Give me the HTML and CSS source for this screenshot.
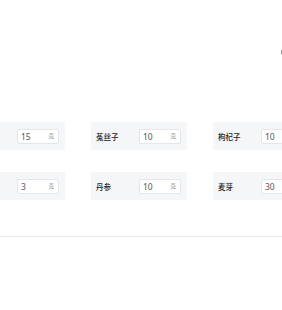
FILE: index.html
```html
<!DOCTYPE html>
<html lang="zh">
<head>
<meta charset="utf-8">
<link rel="stylesheet" href="styles.css">
</head>
<body>
<div class="page">
  <div class="toolbar">
    <svg class="tool-icon" width="8" height="10" viewBox="0 0 8 10"><path d="M6 1.5 A3.5 3.5 0 0 0 6 8.5" fill="none" stroke="#9a9a9a" stroke-width="1.2"/></svg>
  </div>
  <div class="grid">
    <div class="card"><span class="name">黄芪</span><div class="field"><span class="val">15</span><span class="unit">克</span></div></div>
    <div class="card"><span class="name">菟丝子</span><div class="field"><span class="val">10</span><span class="unit">克</span></div></div>
    <div class="card"><span class="name">枸杞子</span><div class="field"><span class="val">10</span><span class="unit">克</span></div></div>
    <div class="card"><span class="name">当归</span><div class="field"><span class="val">10</span><span class="unit">克</span></div></div>
    <div class="card"><span class="name">甘草</span><div class="field"><span class="val">3</span><span class="unit">克</span></div></div>
    <div class="card"><span class="name">丹参</span><div class="field"><span class="val">10</span><span class="unit">克</span></div></div>
    <div class="card"><span class="name">麦芽</span><div class="field"><span class="val">30</span><span class="unit">克</span></div></div>
    <div class="card"><span class="name">山药</span><div class="field"><span class="val">15</span><span class="unit">克</span></div></div>
  </div>
  <div class="divider"></div>
</div>
</body>
</html>
```

FILE: styles.css
```css
html, body {
  margin: 0;
  padding: 0;
  background: #ffffff;
  overflow: hidden;
}
.page {
  width: 282px;
  height: 310px;
  overflow: hidden;
  font-family: "Noto Sans CJK SC", "Noto Sans", sans-serif;
  color: #333;
}
.toolbar {
  height: 122px;
  display: flex;
  justify-content: flex-end;
  align-items: flex-start;
}
.tool-icon {
  margin-top: 47px;
  margin-right: -5px;
}
.grid {
  display: grid;
  grid-template-columns: repeat(4, 96px);
  column-gap: 26px;
  row-gap: 22px;
  margin-left: -31px;
  width: 500px;
}
.card {
  height: 28px;
  background: #f5f6f8;
  display: flex;
  align-items: center;
  justify-content: space-between;
  padding: 0 6px 0 5px;
  box-sizing: border-box;
}
.name {
  font-size: 7.5px;
  font-weight: 500;
  color: #222;
}
.field {
  width: 42px;
  height: 15px;
  box-sizing: border-box;
  background: #fff;
  border: 1px solid #e4e6ea;
  border-radius: 2px;
  display: flex;
  align-items: center;
  justify-content: space-between;
  padding: 0 4px 0 3px;
}
.val {
  font-size: 8.5px;
  color: #555;
  font-family: "Noto Sans", sans-serif;
}
.unit {
  font-size: 5.5px;
  color: #777;
}
.divider {
  margin-top: 36px;
  height: 1px;
  background: #ececec;
}
```
